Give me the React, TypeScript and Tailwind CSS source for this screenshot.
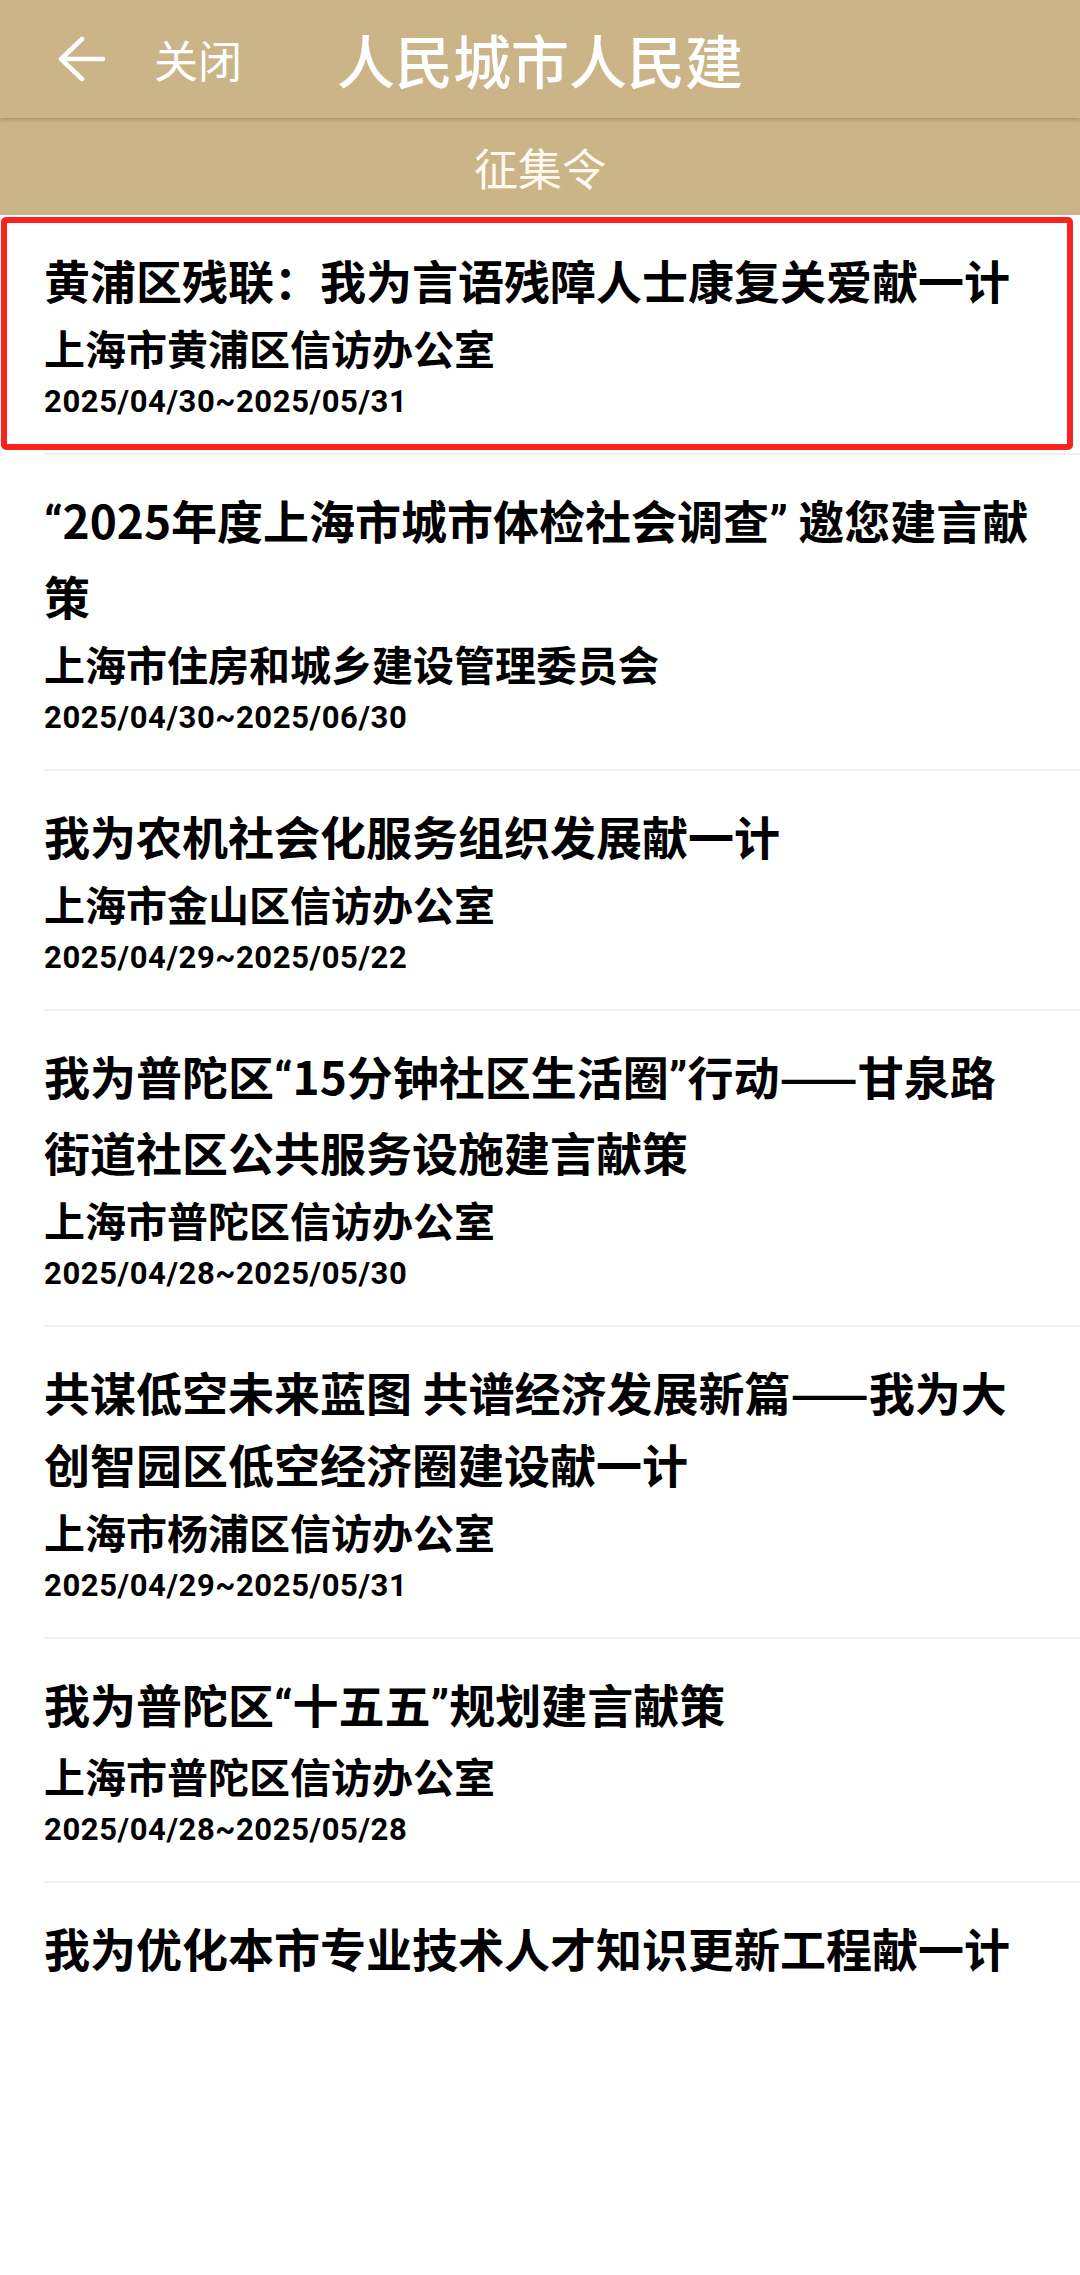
import React from 'react';

type Notice = {
  title: string;
  org: string;
  period: string;
};

const notices: Notice[] = [
  {
    title: '黄浦区残联：我为言语残障人士康复关爱献一计',
    org: '上海市黄浦区信访办公室',
    period: '2025/04/30~2025/05/31',
  },
  {
    title: '“2025年度上海市城市体检社会调查” 邀您建言献策',
    org: '上海市住房和城乡建设管理委员会',
    period: '2025/04/30~2025/06/30',
  },
  {
    title: '我为农机社会化服务组织发展献一计',
    org: '上海市金山区信访办公室',
    period: '2025/04/29~2025/05/22',
  },
  {
    title: '我为普陀区“15分钟社区生活圈”行动——甘泉路街道社区公共服务设施建言献策',
    org: '上海市普陀区信访办公室',
    period: '2025/04/28~2025/05/30',
  },
  {
    title: '共谋低空未来蓝图 共谱经济发展新篇——我为大创智园区低空经济圈建设献一计',
    org: '上海市杨浦区信访办公室',
    period: '2025/04/29~2025/05/31',
  },
  {
    title: '我为普陀区“十五五”规划建言献策',
    org: '上海市普陀区信访办公室',
    period: '2025/04/28~2025/05/28',
  },
  {
    title: '我为优化本市专业技术人才知识更新工程献一计',
    org: '',
    period: '',
  },
];

// curly quotes come out full width in the CJK font, the app shows them narrow
function Title({ text }: { text: string }) {
  const parts = text.split(/([“”])/);
  return (
    <>
      {parts.map((p, i) =>
        p === '“' || p === '”' ? (
          <span key={i} className="font-['Roboto',sans-serif]">
            {p}
          </span>
        ) : (
          <React.Fragment key={i}>{p}</React.Fragment>
        )
      )}
    </>
  );
}

function BackArrow() {
  return (
    <svg width="48" height="46" viewBox="0 0 48 46" fill="none">
      <path
        d="M46 23 H4 M25 3 L4 23 L25 43"
        stroke="white"
        strokeWidth="4.5"
        strokeLinecap="round"
        strokeLinejoin="round"
      />
    </svg>
  );
}

function NoticeItem({ item, selected, last }: { item: Notice; selected?: boolean; last?: boolean }) {
  return (
    <div className="relative">
      <div
        className={
          last
            ? 'ml-[44px] pt-[28px] pb-[28px] pr-[47px]'
            : 'ml-[44px] border-b-2 border-[#f0f0f0] pt-[28px] pb-[28px] pr-[47px]'
        }
      >
        <h2 className="text-[46px] leading-[72px] font-bold text-black">
          <Title text={item.title} />
        </h2>
        {item.org && (
          <p className="text-[41px] leading-[64px] font-bold text-black">{item.org}</p>
        )}
        {item.period && (
          <p className="font-['Roboto',sans-serif] text-[31px] leading-[46px] font-bold text-black tracking-[0.6px]">
            {item.period}
          </p>
        )}
      </div>
      {selected && (
        <div className="absolute top-[2px] left-[1px] right-[7px] bottom-[5px] rounded-[5px] border-[6px] border-[#f8221e] pointer-events-none" />
      )}
    </div>
  );
}

export default function App() {
  return (
    <div className="min-h-[2275px] w-[1080px] bg-white font-['Noto_Sans_CJK_SC','Noto_Sans',sans-serif]">
      <header className="relative z-10 grid h-[118px] grid-cols-[1fr_auto_1fr] items-center bg-[#cbb488] shadow-[0_2px_3px_rgba(120,95,50,0.35)]">
        <div className="flex items-center pl-[57px]">
          <BackArrow />
          <span className="ml-[49px] text-[44px] leading-none text-white">关闭</span>
        </div>
        <h1 className="text-[58px] leading-none font-medium text-white">人民城市人民建</h1>
        <div />
      </header>
      <div className="flex h-[97px] items-center justify-center bg-[#cbb488]">
        <span className="text-[44px] leading-none text-[#fffaf0]">征集令</span>
      </div>
      <div>
        {notices.map((n, i) => (
          <NoticeItem key={i} item={n} selected={i === 0} last={i === notices.length - 1} />
        ))}
      </div>
    </div>
  );
}
